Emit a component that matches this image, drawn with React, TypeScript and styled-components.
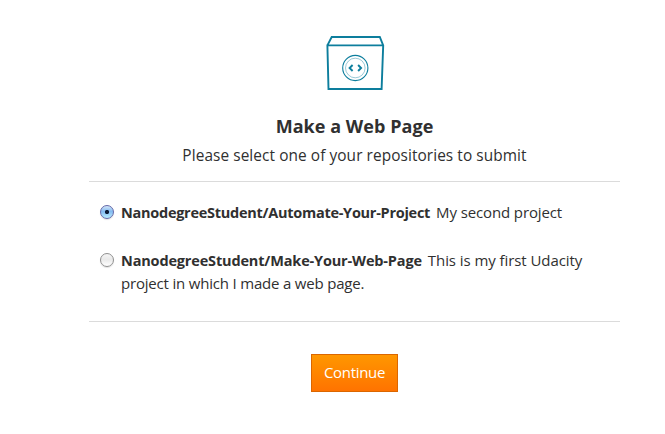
import React, { useState } from "react";
import styled, { createGlobalStyle } from "styled-components";

const GlobalStyle = createGlobalStyle`
  * { box-sizing: border-box; }
  body {
    margin: 0;
    background: #fff;
    color: #303030;
    font-family: "Open Sans", "Noto Sans", sans-serif;
    font-size: 15px;
    line-height: 23px;
  }
`;

const Page = styled.main`
  width: 531px;
  height: 434px;
  margin-left: 89px;
  padding-top: 35px;
  display: flex;
  flex-direction: column;
  align-items: center;
  overflow: hidden;
`;

const BoxIcon = styled.svg`
  display: block;
  flex: none;
  width: 60px;
  height: 57px;
`;

const Title = styled.h1`
  margin: 20px 0 0;
  height: 28px;
  font-size: 18px;
  line-height: 28px;
  font-weight: 700;
  letter-spacing: 0.05px;
  white-space: nowrap;
`;

const Subtitle = styled.p`
  margin: 4px 0 0;
  font-size: 15.4px;
  letter-spacing: 0.08px;
  white-space: nowrap;
`;

const RepoList = styled.form`
  width: 100%;
  height: 141px;
  margin-top: 14px;
  padding: 19px 0 0 11px;
  border-top: 1px solid #dbdbdb;
  border-bottom: 1px solid #dbdbdb;
  display: flex;
  flex-direction: column;
  gap: 25px;
`;

const RepoRow = styled.label`
  display: flex;
  align-items: flex-start;
  gap: 7px;
`;

const Radio = styled.input`
  appearance: none;
  flex: none;
  width: 14px;
  height: 14px;
  margin: 4px 0 0;
  border: 1px solid #8f8f8f;
  border-radius: 50%;
  background: linear-gradient(#f5f5f5, #e9e9e9 45%, #fff);
  box-shadow: 0 1px 1px rgba(0, 0, 0, 0.12);

  &:checked {
    border-color: #6468a8;
    background:
      radial-gradient(circle at 50% 50%, #0c1a35 0 1.7px, transparent 2.5px),
      linear-gradient(#d3e5f8, #83baf0 45%, #b9edff);
  }
`;

const RepoText = styled.div`
  white-space: nowrap;
`;

const RepoName = styled.strong<{ $spacing: number }>`
  font-size: 14.5px;
  font-weight: 700;
  letter-spacing: ${(p) => p.$spacing}px;
  margin-right: 6px;
`;

const RepoDescription = styled.span<{ $spacing: number }>`
  letter-spacing: ${(p) => p.$spacing}px;
`;

const ContinueButton = styled.button`
  flex: none;
  width: 87px;
  height: 38px;
  margin-top: 32px;
  padding: 0 0 2px;
  border: 1px solid #db6600;
  background: linear-gradient(#ff9700, #ff7300);
  color: #fff;
  font: inherit;
  line-height: 34px;
  letter-spacing: -0.3px;
`;

const repos = [
  {
    name: "NanodegreeStudent/Automate-Your-Project",
    nameSpacing: -0.27,
    lines: [{ text: "My second project", spacing: -0.12 }],
  },
  {
    name: "NanodegreeStudent/Make-Your-Web-Page",
    nameSpacing: -0.16,
    lines: [
      { text: "This is my first Udacity", spacing: -0.07 },
      { text: "project in which I made a web page.", spacing: -0.19 },
    ],
  },
];

export default function App() {
  const [selected, setSelected] = useState(0);

  return (
    <>
      <GlobalStyle />
      <Page>
        <BoxIcon viewBox="325 35 60 57" fill="none" stroke="#0d7e9d">
          <path d="M327.4 45.4 331.7 37H379.8L383.2 45.4L381.6 89H328.5L327.4 45.4H383.2" strokeWidth="1.9" />
          <circle cx="355.3" cy="68" r="12.6" strokeWidth="1.1" />
          <circle cx="355.3" cy="68" r="9.8" strokeWidth="0.7" opacity="0.6" />
          <path d="M352.6 65 349.6 68 352.6 71M358.1 65 361.1 68 358.1 71" strokeWidth="1.9" />
        </BoxIcon>
        <Title>Make a Web Page</Title>
        <Subtitle>Please select one of your repositories to submit</Subtitle>
        <RepoList>
          {repos.map((repo, i) => (
            <RepoRow key={repo.name}>
              <Radio type="radio" name="repo" checked={selected === i} onChange={() => setSelected(i)} />
              <RepoText>
                <RepoName $spacing={repo.nameSpacing}>{repo.name}</RepoName>
                {repo.lines.map((line, n) => (
                  <React.Fragment key={line.text}>
                    {n > 0 && <br />}
                    <RepoDescription $spacing={line.spacing}>{line.text}</RepoDescription>
                  </React.Fragment>
                ))}
              </RepoText>
            </RepoRow>
          ))}
        </RepoList>
        <ContinueButton type="button">Continue</ContinueButton>
      </Page>
    </>
  );
}
